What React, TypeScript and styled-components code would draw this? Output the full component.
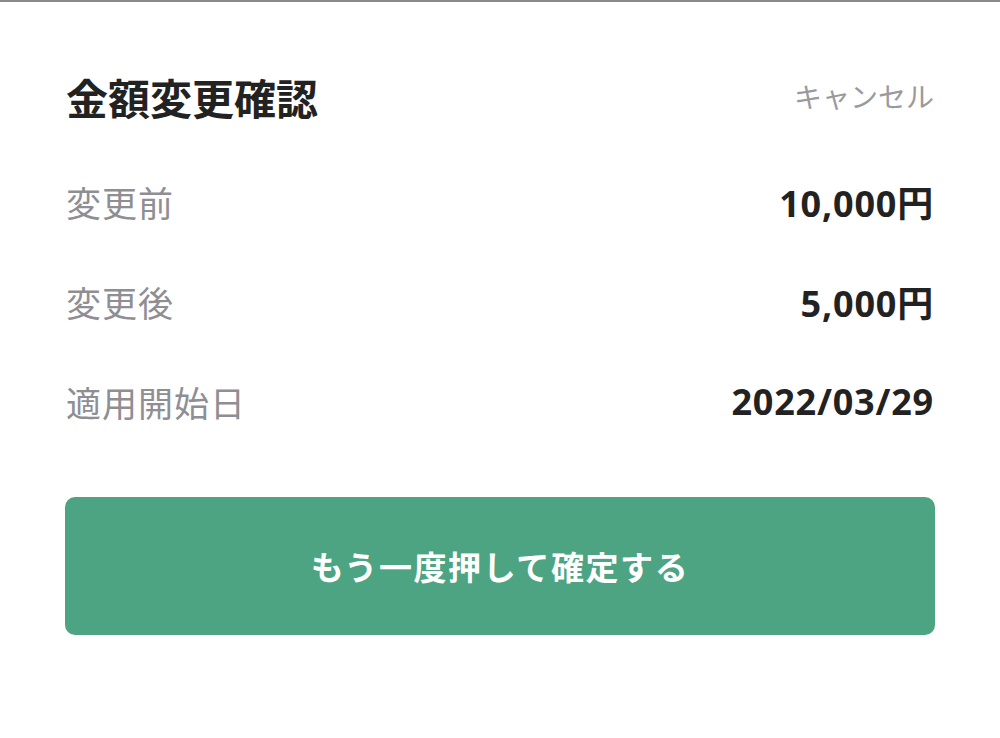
import React from "react";
import styled, { createGlobalStyle } from "styled-components";

const Global = createGlobalStyle`
  html, body { margin: 0; padding: 0; background: #ffffff; }
  body { font-family: "Noto Sans CJK JP", "Noto Sans", sans-serif; }
`;

const Page = styled.div`
  width: 1000px;
  height: 738px;
  box-sizing: border-box;
  border-top: 2px solid #8a8a8a;
  background: #ffffff;
  display: flex;
  flex-direction: column;
  padding: 44px 65px 0 65px;
`;

const Header = styled.div`
  height: 100px;
  display: flex;
  align-items: center;
  justify-content: space-between;
  padding: 0 1px;
`;

const Title = styled.h1`
  margin: 0;
  font-size: 42px;
  font-weight: 700;
  color: #222222;
`;

const Cancel = styled.button`
  border: none;
  background: none;
  padding: 0;
  font-family: inherit;
  font-size: 28px;
  font-weight: 400;
  color: #9a9a9e;
  cursor: pointer;
`;

const List = styled.dl`
  margin: 5px 0 0 0;
  display: flex;
  flex-direction: column;
`;

const Row = styled.div`
  height: 100px;
  display: flex;
  align-items: center;
  justify-content: space-between;
  padding: 0 1px;
`;

const Label = styled.dt`
  margin: 0;
  font-size: 35px;
  font-weight: 400;
  color: #8e8e93;
  letter-spacing: 1px;
`;

const Value = styled.dd`
  margin: 0;
  font-family: "Noto Sans", "Noto Sans CJK JP", sans-serif;
  font-size: 36px;
  font-weight: 700;
  color: #222222;
  letter-spacing: 0.8px;
`;

const ConfirmButton = styled.button`
  margin-top: 46px;
  height: 138px;
  width: 100%;
  border: none;
  border-radius: 10px;
  background: #4ca482;
  color: #ffffff;
  font-family: inherit;
  font-size: 33px;
  font-weight: 700;
  letter-spacing: 1.6px;
  cursor: pointer;
`;

const rows = [
  { label: "変更前", value: "10,000円" },
  { label: "変更後", value: "5,000円" },
  { label: "適用開始日", value: "2022/03/29" },
];

export default function App() {
  return (
    <>
      <Global />
      <Page>
        <Header>
          <Title>金額変更確認</Title>
          <Cancel>キャンセル</Cancel>
        </Header>
        <List>
          {rows.map((r) => (
            <Row key={r.label}>
              <Label>{r.label}</Label>
              <Value>{r.value}</Value>
            </Row>
          ))}
        </List>
        <ConfirmButton>もう一度押して確定する</ConfirmButton>
      </Page>
    </>
  );
}
